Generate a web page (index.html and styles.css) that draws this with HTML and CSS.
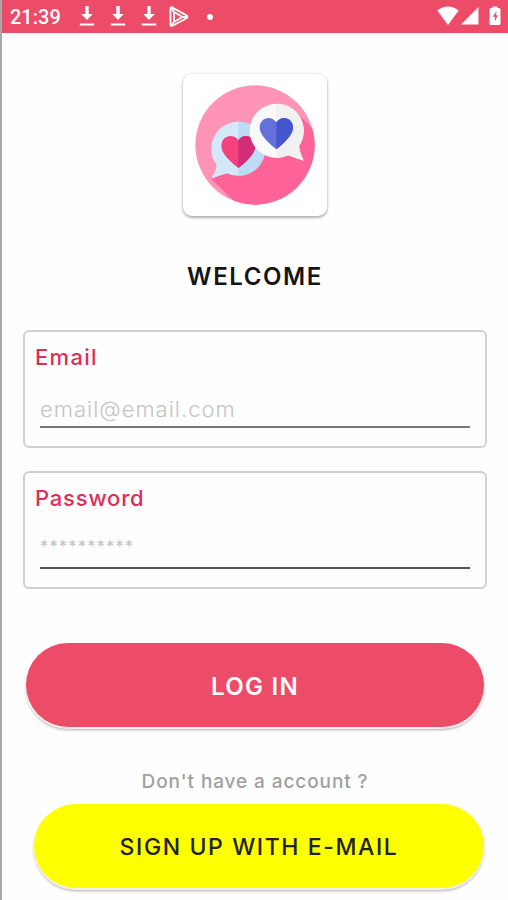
FILE: index.html
```html
<!DOCTYPE html>
<html lang="en">
<head>
  <meta charset="UTF-8" />
  <meta name="viewport" content="width=device-width, initial-scale=1.0"/>
  <title>Welcome</title>
  <link rel="stylesheet" href="styles.css">
</head>
<body>
  <div class="screen">
    <header class="status-bar">
      <span class="clock">21:39</span>
      <svg class="download" viewBox="0 0 16 21"><path d="M6.3 0h3.4v8h4L8 14 2.3 8h4zM.8 17.6h14.4v2H.8z"/></svg>
      <svg class="download" viewBox="0 0 16 21"><path d="M6.3 0h3.4v8h4L8 14 2.3 8h4zM.8 17.6h14.4v2H.8z"/></svg>
      <svg class="download" viewBox="0 0 16 21"><path d="M6.3 0h3.4v8h4L8 14 2.3 8h4zM.8 17.6h14.4v2H.8z"/></svg>
      <svg class="games" viewBox="0 0 20 22"><path d="M1.500 2.500Q1.500.5 3.500 1.600L17.600 9.500Q19.300 11 17.600 12.200L3.500 19.800Q1.500 20.800 1.500 18.800z"/><path d="M5 6v10l8.500-5zM2 19.500L5 16M2.500 2L5 6M13.500 11H18"/></svg>
      <span class="dot"></span>
      <span class="spacer"></span>
      <svg class="wifi" viewBox="0 0 22 20"><path d="M.3 4.5Q11-3.5 21.7 4.5L11 19z"/></svg>
      <svg class="signal" viewBox="0 0 18 19"><path d="M17.5 1v17.5H0z"/></svg>
      <svg class="battery" viewBox="0 0 12 20"><path fill-rule="evenodd" d="M3.5.5h5V2H10q1.5 0 1.5 1.500v14Q11.500 19 10 19H2Q.5 19 .5 17.500v-14Q.5 2 2 2h1.500zM7.600 5L3.700 10.800H6v4.800L8.800 9.300H6.900z"/></svg>
    </header>

    <main class="content">
      <div class="logo">
        <svg viewBox="24 27 432 426">
          <defs>
            <clipPath id="disc"><circle cx="240" cy="240" r="179"/></clipPath>
            <clipPath id="pinkHalf"><rect x="190" y="180" width="80" height="140"/></clipPath>
            <clipPath id="blueHalf"><rect x="304" y="140" width="70" height="130"/></clipPath>
          </defs>
          <circle cx="240" cy="240" r="179" fill="#ff94b6"/>
          <path clip-path="url(#disc)" d="M106 340L265 190 372 150 450 230V450H220z" fill="#ff6398"/>
          <path d="M125 300A81 81 0 1 1 156 325Q132 333 108 341Q122 322 125 300z" fill="#d3e8f8"/>
          <path d="M190 170A81 81 0 0 1 190 332z" fill="#badbf3"/>
          <path d="M190 309Q139 270 139 243C139 213 174 203 190 226C206 203 241 213 241 243Q241 270 190 309z" fill="#f2437f"/>
          <path clip-path="url(#pinkHalf)" d="M190 309Q139 270 139 243C139 213 174 203 190 226C206 203 241 213 241 243Q241 270 190 309z" fill="#d32c78"/>
          <path d="M372 243A81 81 0 1 0 339 271L386 287Q374 262 372 243z" fill="#f9f9fa"/>
          <path d="M304 116A81 81 0 0 1 372 243Q374 262 386 287L339 271Q322 278 304 278z" fill="#f1f1f2"/>
          <path d="M304 253Q254 213 254 188C254 158 288 149 304 172C320 149 354 158 354 188Q354 213 304 253z" fill="#6470db"/>
          <path clip-path="url(#blueHalf)" d="M304 253Q254 213 254 188C254 158 288 149 304 172C320 149 354 158 354 188Q354 213 304 253z" fill="#4655cd"/>
        </svg>
      </div>

      <h1 class="title">WELCOME</h1>

      <form class="form">
        <div class="field">
          <label for="email">Email</label>
          <input type="text" id="email" placeholder="email@email.com">
        </div>
        <div class="field password">
          <label for="password">Password</label>
          <input type="password" id="password" placeholder="**********">
        </div>
        <button type="button" class="btn login">LOG IN</button>
        <p class="hint">Don't have a account ?</p>
        <button type="button" class="btn signup">SIGN UP WITH E-MAIL</button>
      </form>
    </main>
  </div>
</body>
</html>
```

FILE: styles.css
```css
* {
  box-sizing: border-box;
}

body {
  margin: 0;
  font-family: Inter, "Open Sans", sans-serif;
  background: #fefefe;
}

.screen {
  height: 900px;
  overflow: hidden;
  border-left: 2px solid #aaa;
}

.status-bar {
  display: flex;
  align-items: center;
  height: 33px;
  margin-left: -2px;
  padding: 0 7px 0 8px;
  background: #ec4c67;
  border-left: 2px solid #d0485f;
}

.status-bar svg {
  flex: none;
  fill: #fff;
}

.clock {
  width: 69px;
  font-family: Roboto, sans-serif;
  font-size: 20px;
  font-weight: 500;
  color: #fff;
}

.download {
  width: 16px;
  height: 21px;
  margin-right: 15px;
}

.status-bar .games {
  width: 20px;
  height: 22px;
  margin-left: -3px;
  fill: none;
  stroke: #fff;
  stroke-width: 1.8;
}

.dot {
  width: 6px;
  height: 6px;
  margin-left: 18px;
  border-radius: 50%;
  background: #fff;
}

.spacer {
  flex: 1;
}

.wifi {
  width: 22px;
  height: 20px;
  margin-bottom: 2px;
}

.signal {
  width: 18px;
  height: 19px;
  margin: 0 10px 2px 2px;
}

.battery {
  width: 12px;
  height: 20px;
  margin-bottom: 2px;
}

.content {
  padding: 41px 21px 0;
}

.logo {
  width: 144px;
  height: 142px;
  margin: 0 auto;
  border-radius: 9px;
  background: #fff;
  box-shadow: 0 2px 3px rgba(0, 0, 0, 0.28), 0 0 3px rgba(0, 0, 0, 0.14);
}

.logo svg {
  display: block;
}

.title {
  margin: 46px 0 38px;
  font-size: 24px;
  line-height: 30px;
  font-weight: 600;
  letter-spacing: 1.6px;
  text-align: center;
  color: #151515;
}

.form {
  display: flex;
  flex-direction: column;
}

.field {
  height: 118px;
  margin-bottom: 23px;
  padding: 11px 15px 0 10px;
  border: 2px solid #d0d0d0;
  border-radius: 6px;
}

.field label {
  display: block;
  font-size: 22px;
  line-height: 28px;
  font-weight: 500;
  letter-spacing: 1.3px;
  color: #dd2e58;
}

.field input {
  display: block;
  width: 430px;
  height: 42px;
  margin: 15px 0 0 5px;
  padding: 5px 0 0;
  border: none;
  border-bottom: 2px solid #777;
  background: none;
  font-family: inherit;
  font-size: 22px;
  outline: none;
}

.field input::placeholder {
  color: #c4c4c4;
  font-weight: 300;
  letter-spacing: 1px;
}

.field.password label {
  letter-spacing: 0.8px;
}

.field.password input {
  padding: 0 0 7px;
  border-bottom-color: #555;
}

.password input::placeholder {
  font-size: 16px;
  font-weight: 500;
  letter-spacing: 1.1px;
}

.btn {
  height: 84px;
  border: none;
  border-radius: 42px;
  font-family: inherit;
  font-size: 23px;
  box-shadow: 0 1px 0 1px #f3efed, 0 3px 3px rgba(0, 0, 0, 0.32);
}

.login {
  margin: 31px 3px 0 3px;
  padding-top: 3px;
  background: #ec4c67;
  color: #fff;
  font-weight: 600;
  font-size: 24px;
  letter-spacing: 1.3px;
}

.hint {
  margin: 42px 0 9px;
  font-size: 19px;
  line-height: 26px;
  letter-spacing: 0.9px;
  font-weight: 500;
  text-align: center;
  color: #a0a0a0;
}

.signup {
  margin: 0 3px 0 11px;
  padding-top: 3px;
  background: #ff0;
  color: #222;
  font-weight: 500;
  letter-spacing: 1.6px;
}
```
